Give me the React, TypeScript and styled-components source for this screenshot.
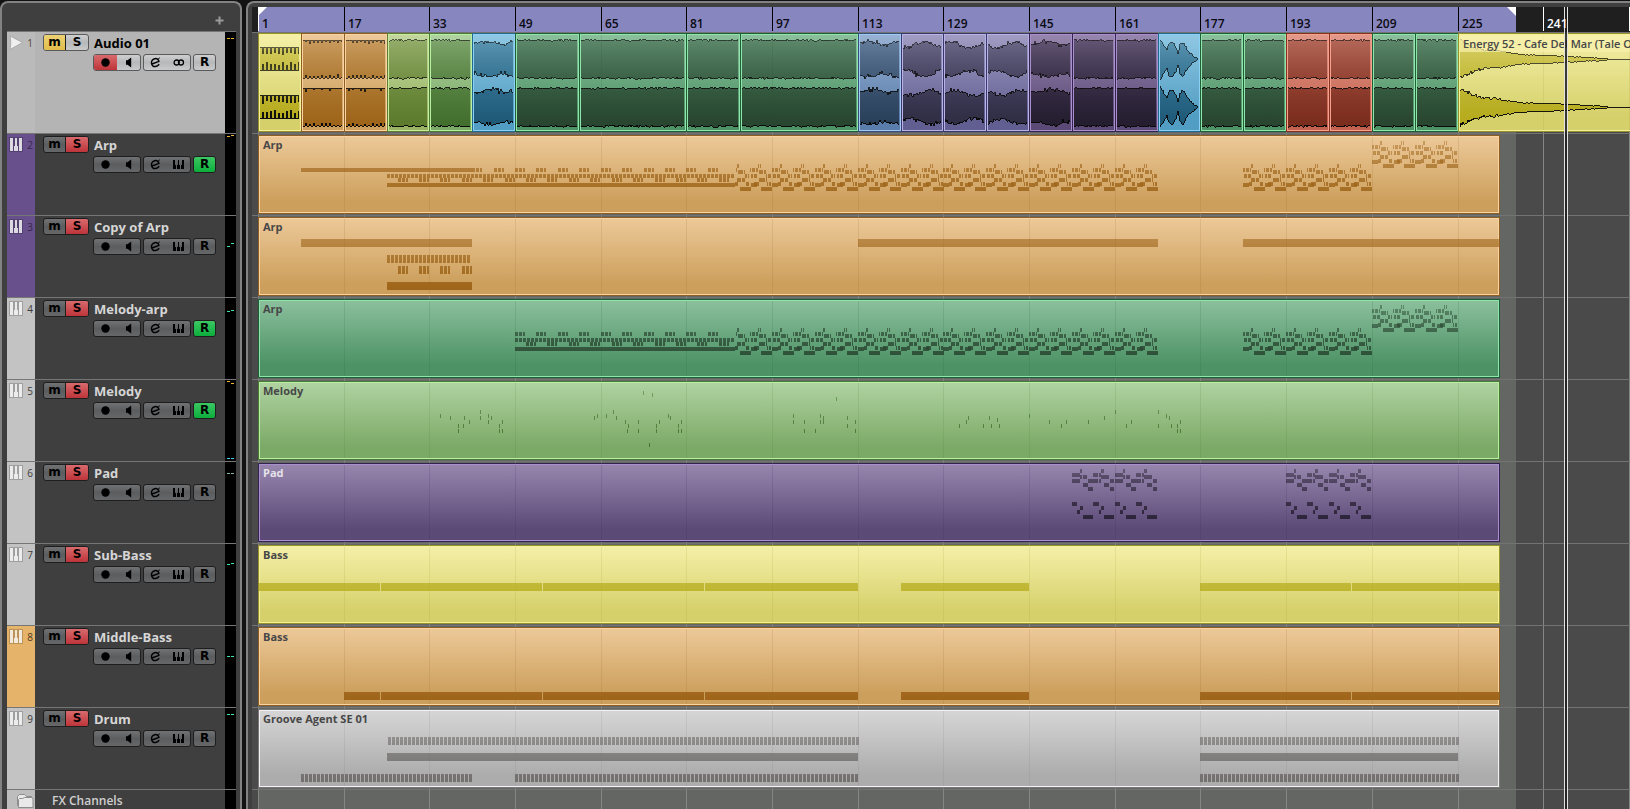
import React from "react";
import styled, { createGlobalStyle, css } from "styled-components";

const GlobalStyle = createGlobalStyle`
  * { box-sizing: border-box; }
  html, body { margin: 0; background: #121212; }
  body { font-family: "Open Sans", "Noto Sans", sans-serif; overflow: hidden; }
  button { font: inherit; padding: 0; border: 0; background: none; color: inherit; }
`;

/* ---------- time scale ---------- */

const BAR_WIDTH = 5.355;
const LAST_BAR = 233;
const PROJECT_END = 235.9;
const PLAYHEAD_BAR = 244.8;
const toX = (bar: number) => Math.round((bar - 1) * BAR_WIDTH);
const RULER_BARS = Array.from({ length: 17 }, (_, i) => 1 + i * 16);
const LAST_LABEL = 241;

/* ---------- palette ---------- */

interface Tone {
  top: string;
  bottom: string;
  light: string;
  edge: string;
  ink: string;
}

const tones: Record<string, Tone> = {
  orange: { top: "#edc999", bottom: "#cc9f5c", light: "#fbd3a3", edge: "#8e5f22", ink: "#9f661b" },
  green: { top: "#8cc09d", bottom: "#4c9265", light: "#8fe6ab", edge: "#1f5f37", ink: "#294630" },
  leaf: { top: "#b0d3a2", bottom: "#7ba966", light: "#b9f09f", edge: "#4a7a38", ink: "#44702f" },
  moss: { top: "#c3d79f", bottom: "#98b463", light: "#c9ee9b", edge: "#5e7c33", ink: "#5d7c2e" },
  violet: { top: "#9787ae", bottom: "#5b4976", light: "#a98fcd", edge: "#34244f", ink: "#251e30" },
  lavender: { top: "#a19dc3", bottom: "#615e92", light: "#b6b3e8", edge: "#3a376a", ink: "#302e44" },
  steel: { top: "#98b2d3", bottom: "#5b7dab", light: "#a4c8f4", edge: "#31507c", ink: "#2a4059" },
  blue: { top: "#90c8e3", bottom: "#519dc3", light: "#8bd0f5", edge: "#22698e", ink: "#1f5a78" },
  red: { top: "#e39a8b", bottom: "#c3614e", light: "#f7a08d", edge: "#86301f", ink: "#7b2d1e" },
  yellow: { top: "#f5f0a8", bottom: "#d5d06a", light: "#f5f09a", edge: "#98922a", ink: "#b6ab1c" },
  grey: { top: "#d6d6d6", bottom: "#acacac", light: "#f3f0f3", edge: "#787878", ink: "#747070" },
};

/* ---------- note data ---------- */

type Note = [x: number, y: number, w: number, h: number];

const bar = (from: number, to: number, y: number, h: number): Note => [
  toX(from),
  y,
  toX(to) - toX(from),
  h,
];

const dashes = (from: number, to: number, y: number, h: number): Note[] => {
  const out: Note[] = [];
  for (let x = toX(from); x < toX(to) - 1; x += 4) out.push([x, y, 3, h]);
  return out;
};

const groups = (from: number, to: number, shift: number, y: number, h: number): Note[] => {
  const out: Note[] = [];
  for (let b = from; b < to; b += 4) {
    const x = toX(b) + shift;
    out.push([x, y, 3, h], [x + 4, y, 3, h], [x + 8, y, 2, h]);
  }
  return out;
};

const ARP_FIGURE: Note[] = [
  [8, 0, 2, 4], [29, 0, 1, 4], [31, 0, 1, 4],
  [0, 4, 2, 4], [3, 4, 3, 4], [7, 4, 1, 4], [21, 4, 1, 4], [23, 4, 3, 4], [27, 4, 2, 4],
  [9, 6, 5, 4], [15, 6, 1, 4], [30, 6, 4, 4], [35, 6, 2, 4],
  [1, 10, 3, 4], [5, 10, 3, 4], [16, 10, 2, 4], [19, 10, 1, 4], [22, 10, 2, 4], [25, 10, 3, 4],
  [37, 10, 1, 8], [39, 10, 3, 4],
  [8, 14, 4, 4], [13, 14, 3, 4], [30, 14, 6, 4],
  [6, 18, 3, 4], [17, 18, 3, 4], [25, 18, 5, 4], [38, 18, 1, 4], [40, 18, 2, 4],
  [0, 19, 6, 4], [22, 19, 6, 4],
  [11, 23, 11, 4], [32, 23, 11, 4],
];

const PAD_FIGURE: Note[] = [
  [8, 0, 2, 4], [29, 0, 3, 4],
  [0, 4, 8, 4], [21, 4, 5, 4], [27, 4, 2, 4],
  [8, 6, 2, 4], [11, 6, 4, 4], [29, 6, 8, 4],
  [0, 10, 8, 4], [16, 10, 10, 4], [27, 10, 2, 4], [38, 10, 4, 4],
  [11, 14, 5, 4], [32, 14, 5, 4],
  [16, 18, 5, 4], [38, 18, 4, 4],
  [0, 33, 5, 4], [21, 33, 6, 4],
  [8, 37, 3, 4], [29, 37, 3, 4],
  [5, 41, 3, 4], [27, 41, 2, 4],
  [11, 46, 10, 4], [32, 46, 10, 4],
];

const repeat = (figure: Note[], from: number, to: number, y: number): Note[] => {
  const out: Note[] = [];
  for (let b = from; b < to; b += 8)
    figure.forEach(([nx, ny, w, h]) => out.push([toX(b) + nx, y + ny, w, h]));
  return out;
};

const arpFigures: Note[] = [
  ...repeat(ARP_FIGURE, 89, 97, 29).filter(([x]) => x >= toX(90)),
  ...repeat(ARP_FIGURE, 97, 169, 29),
  ...repeat(ARP_FIGURE, 185, 209, 29),
  ...repeat(ARP_FIGURE, 209, 225, 6),
];

const arpNotes: Note[] = [
  bar(9, 41, 33, 4),
  ...groups(41, 89, 0, 33, 4),
  ...dashes(25, 90, 39, 4),
  ...groups(25, 88, 11, 43, 4),
  bar(25, 90, 48, 4),
  ...arpFigures,
];

const copyNotes: Note[] = [
  bar(9, 41, 22, 8),
  bar(113, 169, 22, 8),
  bar(185, 233, 22, 8),
  ...dashes(25, 41, 38, 8),
  ...groups(25, 41, 11, 49, 8),
  bar(25, 41, 65, 8),
];

const melodyArpNotes: Note[] = [
  ...groups(49, 89, 0, 33, 4),
  ...dashes(49, 90, 39, 4),
  ...groups(49, 88, 11, 43, 4),
  bar(49, 90, 48, 4),
  ...arpFigures,
];

const MELODY_TICKS: [number, number][] = [
  [182, 33], [192, 35], [206, 35], [211, 39], [200, 43], [205, 43], [200, 48], [222, 29], [222, 35],
  [230, 33], [233, 35], [230, 39], [244, 39], [241, 43], [241, 48], [244, 48],
  [336, 35], [339, 33], [348, 33], [355, 29], [358, 35], [367, 39], [370, 43], [369, 48], [380, 39],
  [380, 48], [385, 10], [394, 12], [391, 62], [398, 43], [398, 48], [401, 39], [410, 33], [412, 35],
  [420, 43], [420, 48], [423, 39], [423, 48],
  [535, 33], [535, 39], [546, 39], [546, 48], [557, 48], [562, 33], [562, 39], [565, 35], [565, 39],
  [578, 16], [589, 35], [589, 43], [597, 39], [597, 48],
  [701, 43], [708, 39], [710, 35], [725, 43], [731, 35], [733, 43], [739, 37], [741, 43],
  [771, 33], [791, 39], [803, 43], [808, 39], [830, 39], [846, 35], [857, 29], [868, 43], [873, 39],
  [900, 29], [900, 43], [908, 33], [911, 35], [913, 43], [919, 43], [922, 39], [919, 48], [922, 48],
];
const melodyNotes: Note[] = MELODY_TICKS.map(([x, y]) => [x, y, 1, 4]);

const padNotes: Note[] = [...repeat(PAD_FIGURE, 153, 169, 6), ...repeat(PAD_FIGURE, 193, 209, 6)];

const bassNotes = (start: number, y: number): Note[] => {
  const seams = [23.8, 54, 84.3].map((b) => toX(b));
  const stops = [toX(start), ...seams, toX(113)];
  const lead = stops.slice(0, -1).map((x, i): Note => [x + (i ? 1 : 0), y, stops[i + 1] - x - (i ? 1 : 0), 8]);
  const tail = toX(205.2);
  return [
    ...lead,
    bar(121, 145, y, 8),
    [toX(177), y, tail - toX(177), 8],
    [tail + 1, y, toX(233) - tail - 1, 8],
  ];
};

const drumNotes: Note[] = [
  ...dashes(25.2, 113, 28, 8),
  ...dashes(177, 225, 28, 8),
  bar(25, 113, 44, 8),
  bar(177, 225, 44, 8),
  ...dashes(9, 41, 65, 8),
  ...dashes(49, 113, 65, 8),
  ...dashes(177, 225, 65, 8),
];

/* ---------- tracks ---------- */

interface MeterMark { y: [number, number]; color: string }

interface Track {
  name: string;
  stripe: string;
  numberColor: string;
  read?: boolean;
  audio?: boolean;
  meter: MeterMark[];
  clip?: { label: string; tone: Tone; notes: Note[]; labelColor?: string };
}

const AMBER = "#f0b428";
const MINT = "#3ce6a8";
const SILVER = "#c3c3c3";

const tracks: Track[] = [
  { name: "Audio 01", stripe: "#bababa", numberColor: "#5a4634", audio: true, meter: [{ y: [6, 6], color: AMBER }] },
  { name: "Arp", stripe: "#67508b", numberColor: "#35284c", read: true, meter: [{ y: [2, 1], color: AMBER }], clip: { label: "Arp", tone: tones.orange, notes: arpNotes } },
  { name: "Copy of Arp", stripe: "#67508b", numberColor: "#35284c", meter: [{ y: [30, 27], color: MINT }], clip: { label: "Arp", tone: tones.orange, notes: copyNotes } },
  { name: "Melody-arp", stripe: SILVER, numberColor: "#3c3c3c", read: true, meter: [{ y: [13, 12], color: MINT }], clip: { label: "Arp", tone: tones.green, notes: melodyArpNotes } },
  { name: "Melody", stripe: SILVER, numberColor: "#3c3c3c", read: true, meter: [{ y: [1, 3], color: AMBER }, { y: [78, 78], color: "#3cc8f0" }], clip: { label: "Melody", tone: tones.leaf, notes: melodyNotes } },
  { name: "Pad", stripe: SILVER, numberColor: "#3c3c3c", meter: [{ y: [11, 11], color: "#7fb59a" }], clip: { label: "Pad", tone: tones.violet, notes: padNotes, labelColor: "#e6e2ea" } },
  { name: "Sub-Bass", stripe: SILVER, numberColor: "#3c3c3c", meter: [{ y: [20, 19], color: MINT }], clip: { label: "Bass", tone: tones.yellow, notes: bassNotes(1, 38) } },
  { name: "Middle-Bass", stripe: "#e6b36a", numberColor: "#4d3a1e", meter: [{ y: [30, 30], color: MINT }], clip: { label: "Bass", tone: tones.orange, notes: bassNotes(17, 65) } },
  { name: "Drum", stripe: SILVER, numberColor: "#3c3c3c", meter: [{ y: [6, 6], color: MINT }], clip: { label: "Groove Agent SE 01", tone: tones.grey, notes: drumNotes } },
];

type WaveKind = "pulse" | "spiky" | "flat" | "rough" | "swell" | "break" | "decay";

const audioClips: { from: number; to: number; tone: Tone; wave: WaveKind; label?: string }[] = [
  { from: 1, to: 9, tone: tones.yellow, wave: "pulse" },
  { from: 9, to: 17, tone: tones.orange, wave: "spiky" },
  { from: 17, to: 25, tone: tones.orange, wave: "spiky" },
  { from: 25, to: 33, tone: tones.moss, wave: "flat" },
  { from: 33, to: 41, tone: tones.leaf, wave: "flat" },
  { from: 41, to: 49, tone: tones.blue, wave: "rough" },
  { from: 49, to: 61, tone: tones.green, wave: "flat" },
  { from: 61, to: 81, tone: tones.green, wave: "flat" },
  { from: 81, to: 91, tone: tones.green, wave: "flat" },
  { from: 91, to: 113, tone: tones.green, wave: "flat" },
  { from: 113, to: 121, tone: tones.steel, wave: "rough" },
  { from: 121, to: 129, tone: tones.lavender, wave: "swell" },
  { from: 129, to: 137, tone: tones.lavender, wave: "swell" },
  { from: 137, to: 145, tone: tones.lavender, wave: "swell" },
  { from: 145, to: 153, tone: tones.violet, wave: "rough" },
  { from: 153, to: 161, tone: tones.violet, wave: "flat" },
  { from: 161, to: 169, tone: tones.violet, wave: "flat" },
  { from: 169, to: 177, tone: tones.blue, wave: "break" },
  { from: 177, to: 185, tone: tones.green, wave: "flat" },
  { from: 185, to: 193, tone: tones.green, wave: "flat" },
  { from: 193, to: 201, tone: tones.red, wave: "flat" },
  { from: 201, to: 209, tone: tones.red, wave: "flat" },
  { from: 209, to: 217, tone: tones.green, wave: "flat" },
  { from: 217, to: 225, tone: tones.green, wave: "flat" },
  { from: 225, to: 321, tone: tones.yellow, wave: "decay", label: "Energy 52 - Cafe Del Mar (Tale Of Us)" },
];

/* ---------- waveform ---------- */

const random = (seed: number) => () => {
  seed = (seed + 0x6d2b79f5) | 0;
  let t = Math.imul(seed ^ (seed >>> 15), 1 | seed);
  t = (t + Math.imul(t ^ (t >>> 7), 61 | t)) ^ t;
  return ((t ^ (t >>> 14)) >>> 0) / 4294967296;
};

const curve = (points: [number, number][], x: number) => {
  for (let i = 1; i < points.length; i++) {
    const [x0, y0] = points[i - 1];
    const [x1, y1] = points[i];
    if (x <= x1) return y0 + ((x - x0) / (x1 - x0)) * (y1 - y0);
  }
  return points[points.length - 1][1];
};

const BREAK_SHAPE: [number, number][] = [
  [0, 20], [3, 16], [7, 9], [9, 16], [13, 17], [16, 12], [18, 5], [20, 14], [23, 17], [25, 14], [27, 10], [30, 6], [34, 3], [38, 0], [43, 0],
];
const DECAY_SHAPE: [number, number][] = [
  [0, 18], [8, 15], [14, 12], [24, 9], [34, 9], [46, 7], [60, 5], [75, 4], [90, 4], [106, 3], [125, 2], [145, 1], [150, 0],
];

const amplitude = (kind: WaveKind, x: number, r: () => number, phase: number) => {
  switch (kind) {
    case "pulse":
      return x % 4 < 3 ? 12 - (x % 2) : 3 + r() * 3;
    case "spiky":
      return x % 4 === 3 ? 15 + r() * 3 : 19;
    case "flat":
      return r() > 0.8 ? 17.6 : 18.6 + r() * 1.2;
    case "rough":
      return 17 + Math.sin(x / 5 + phase) * 1.5 - (r() > 0.7 ? r() * 4 : r()) + (r() > 0.9 ? 2 : 0);
    case "swell":
      return 15.5 + Math.cos(x / 6 + phase) * 3 - r() * 3 + (r() > 0.85 ? 2 : 0);
    case "break":
      return Math.max(0, curve(BREAK_SHAPE, x) + (x < 36 ? r() * 2 - 1 : 0));
    case "decay":
      return Math.max(0, curve(DECAY_SHAPE, x) + (x < 140 ? (r() - 0.5) * Math.max(1, 4 - x / 20) : 0));
  }
};

const channelPaths = (kind: WaveKind, width: number, mid: number, seed: number) => {
  const r = random(seed);
  const phase = (seed % 7) * 0.9;
  const upper: string[] = [];
  const lower: string[] = [];
  for (let x = 2; x <= width - 2; x++) {
    upper.push(`${x} ${mid - Math.round(amplitude(kind, x - 2, r, phase))}`);
    lower.push(`${x} ${mid + Math.round(amplitude(kind, x - 2, r, phase))}`);
  }
  return {
    area: `M${upper.join("L")}L${[...lower].reverse().join("L")}Z`,
    line: `M${upper.join("L")}M${lower.join("L")}`,
  };
};

/* ---------- shell ---------- */

const Workspace = styled.main`
  display: flex;
  gap: 4px;
  height: 100vh;
  padding-top: 1px;
`;

const panelFrame = css`
  display: flex;
  flex-direction: column;
  overflow: hidden;
  background: #3f3f3f;
  border: 2px solid #828282;
  border-bottom: 0;
`;

const TrackPanel = styled.section`
  ${panelFrame}
  flex: 0 0 242px;
  border-radius: 8px 8px 0 0;
  padding: 0 4px 0 5px;
`;

const ArrangePanel = styled.section`
  ${panelFrame}
  flex: 1;
  min-width: 0;
  border-right: 0;
  border-radius: 8px 0 0 0;
  padding: 4px 0 0 4px;
`;

const PanelHeader = styled.header`
  display: flex;
  flex: 0 0 28px;
  align-items: center;
  justify-content: flex-end;
  padding: 6px 12px 0 0;
`;

const AddButton = styled.button`
  display: flex;
  width: 9px;
  height: 9px;
  color: #9b9b9b;
`;

/* ---------- track list ---------- */

const TrackList = styled.ol`
  flex: 1;
  margin: 0;
  padding: 0;
  list-style: none;
  background: linear-gradient(90deg, transparent calc(100% - 11px), #000 calc(100% - 11px));
`;

const TrackRow = styled.li<{ $selected?: boolean }>`
  display: flex;
  height: ${(p) => (p.$selected ? 102 : 82)}px;
  border-top: 1px solid #767676;
  background: ${(p) => (p.$selected ? "#b4b4b4" : "#3f3f3f")};
  color: ${(p) => (p.$selected ? "#000" : "#d6d6d6")};
`;

const Stripe = styled.div<{ $color: string; $ink: string }>`
  display: flex;
  flex: 0 0 28px;
  align-items: flex-start;
  justify-content: space-between;
  padding: 3px 2px 0;
  background: ${(p) => p.$color};
  color: ${(p) => p.$ink};
  font-size: 10px;
  line-height: 16px;
`;

const TrackBody = styled.div`
  flex: 1;
  padding: 2px 0 0 8px;
`;

const TitleLine = styled.div`
  display: flex;
  gap: 5px;
  height: 17px;
`;

const TrackName = styled.h2`
  margin: 0;
  font-size: 13px;
  font-weight: 700;
  line-height: 19px;
  white-space: nowrap;
`;

const ControlLine = styled.div`
  display: flex;
  gap: 2px;
  margin: 3px 0 0 50px;
`;

const ButtonGroup = styled.div<{ $bright?: boolean }>`
  display: flex;
  height: 17px;
  border: 1px solid ${(p) => (p.$bright ? "#5a5a5a" : "#1e1e1e")};
  border-radius: 3px;
  overflow: hidden;
  background: ${(p) =>
    p.$bright ? "linear-gradient(#cfcfd0, #b7b8ba 50%, #c9cacb)" : "linear-gradient(#717274, #5c5d5f 50%, #666769)"};
`;

const lit = {
  mute: "linear-gradient(#eed273, #e0bd4a)",
  solo: "linear-gradient(#d96a6d, #bd3439)",
  record: "linear-gradient(#d96a6d, #bd3439)",
  read: "linear-gradient(#3cc763, #0cae3c)",
};

const ControlButton = styled.button<{ $lit?: keyof typeof lit; $divided?: boolean; $narrow?: boolean }>`
  display: flex;
  align-items: center;
  justify-content: center;
  width: ${(p) => (p.$narrow ? 21 : 23)}px;
  height: 15px;
  background: ${(p) => (p.$lit ? lit[p.$lit] : "transparent")};
  border-left: ${(p) => (p.$divided ? "1px solid #1e1e1e" : "0")};
  color: #000;
  font-family: "DejaVu Sans", sans-serif;
  font-size: 12px;
  font-weight: 700;
  line-height: 15px;
`;

const Meter = styled.svg`
  flex: 0 0 11px;
  height: 100%;
  background: #000;
`;

const FolderRow = styled(TrackRow)`
  height: 30px;
  background: transparent;
`;

const FolderStripe = styled(Stripe)`
  justify-content: flex-end;
  padding: 3px 1px 0;
`;

const FolderName = styled.h2`
  margin: 0;
  padding: 2px 0 0 17px;
  font-size: 12px;
  font-weight: 600;
  line-height: 17px;
  color: #cfcfcf;
`;

/* ---------- timeline ---------- */

const Timeline = styled.div`
  position: relative;
  flex: 1;
  overflow: hidden;
`;

const Ruler = styled.div`
  position: relative;
  display: flex;
  height: 25px;
  padding-left: 6px;
  background: #1f1f1f;
`;

const LocatorRange = styled.div`
  position: absolute;
  top: 0;
  left: 6px;
  height: 100%;
  background: #8886be;

  &::before,
  &::after {
    content: "";
    position: absolute;
    top: 0;
    border-top: 9px solid #fff;
  }
  &::before { left: 0; border-right: 9px solid transparent; }
  &::after { right: 0; border-left: 9px solid transparent; }
`;

const RulerCell = styled.div<{ $outside: boolean; $first: boolean }>`
  position: relative;
  z-index: 2;
  flex: none;
  height: 24px;
  padding: 9px 0 0 3px;
  border-left: 1px solid ${(p) => (p.$outside || p.$first ? "#fff" : "#000")};
  color: ${(p) => (p.$outside ? "#fff" : "#0a0a12")};
  font-size: 12px;
  font-weight: 600;
  line-height: 16px;
`;

const Lanes = styled.div`
  position: relative;
  height: 100%;
`;

const Backdrop = styled.div<{ $end: number }>`
  position: absolute;
  inset: 0;
  display: flex;
  padding-left: 6px;
  background: linear-gradient(
    90deg,
    #4a4a4a 6px,
    #646664 6px ${(p) => p.$end}px,
    #4a4a4a ${(p) => p.$end}px
  );
`;

const GridCell = styled.div`
  flex: none;
  border-left: 1px solid #858785;
`;

const Lane = styled.div<{ $audio?: boolean }>`
  position: relative;
  display: flex;
  height: ${(p) => (p.$audio ? 101 : 82)}px;
  padding: ${(p) => (p.$audio ? "0 0 1px 6px" : "1px 0 1px 6px")};
  border-top: 1px solid #727372;
`;

const ClipFrame = styled.article<{ $tone: Tone; $joined?: boolean }>`
  display: grid;
  flex: none;
  overflow: hidden;
  border: 1px solid ${(p) => p.$tone.edge};
  border-right-width: ${(p) => (p.$joined ? 0 : 1)}px;
  box-shadow: inset 0 0 0 1px ${(p) => p.$tone.light};
  background: linear-gradient(${(p) => p.$tone.top}, ${(p) => p.$tone.bottom} 85%);

  > * { grid-area: 1 / 1; }
`;

const ClipDrawing = styled.svg`
  display: block;
  margin: -1px;
`;

const ClipLabel = styled.h3<{ $color?: string; $band?: boolean }>`
  align-self: start;
  margin: ${(p) => (p.$band ? 1 : 0)}px 1px;
  padding: 0 0 0 3px;
  background: ${(p) => (p.$band ? "rgba(246, 240, 170, 0.72)" : "transparent")};
  color: ${(p) => p.$color ?? "#474747"};
  font-size: 11px;
  font-weight: ${(p) => (p.$band ? 600 : 700)};
  line-height: 17px;
  white-space: nowrap;
`;

const Playhead = styled.div`
  position: absolute;
  z-index: 1;
  top: 0;
  bottom: 0;
  width: 4px;
  background: rgba(30, 30, 30, 0.85);
  border: solid #e2e2e2;
  border-width: 0 1px;
`;

/* ---------- icons ---------- */

const PlusIcon = () => (
  <svg width="9" height="9" aria-hidden="true">
    <path d="M3.5 0.5h2v3h3v2h-3v3h-2v-3h-3v-2h3z" fill="currentColor" />
  </svg>
);

const RecordIcon = () => (
  <svg width="9" height="9" aria-hidden="true">
    <circle cx="4.5" cy="4.5" r="4.2" fill="currentColor" />
  </svg>
);

const MonitorIcon = () => (
  <svg width="9" height="11" aria-hidden="true">
    <path d="M3.5 3.2L7.2 0.5v10L3.5 7.8H2v-4.6z" fill="currentColor" />
  </svg>
);

const EditIcon = () => (
  <svg width="11" height="11" fill="none" stroke="currentColor" strokeWidth="1.4" aria-hidden="true">
    <path d="M2 7L9 4.4C8.6 2.2 6.8 1.2 4.8 1.7C2.6 2.300 1.300 4.200 1.500 6.200C1.700 8.600 3.400 9.800 5.400 9.500C7 9.300 8.200 8.500 9.200 7.200" />
    <path d="M7.6 2.6L9.8 0.8" strokeWidth="1" />
  </svg>
);

const StereoIcon = () => (
  <svg width="12" height="9" fill="none" stroke="currentColor" strokeWidth="1.3" aria-hidden="true">
    <circle cx="3.6" cy="4.5" r="2.5" />
    <circle cx="8" cy="4.5" r="2.5" />
  </svg>
);

const KeysIcon = () => (
  <svg width="11" height="9" fill="currentColor" shapeRendering="crispEdges" aria-hidden="true">
    <path d="M0 0h2v5h1v4H0zM5 0h1v5h1v4H4V5h1zM9 0h2v9H8V5h1z" />
  </svg>
);

const KeyboardBadge = () => (
  <svg width="14" height="15" shapeRendering="crispEdges" aria-hidden="true">
    <rect width="14" height="15" fill="#000" fillOpacity=".18" />
    <path d="M1 1h3v13H1zM6 1h2v8h1v5H5V9h1zM10 1h3v13h-3z" fill="#fff" fillOpacity=".8" />
  </svg>
);

const WaveBadge = () => (
  <svg width="14" height="15" aria-hidden="true">
    <path d="M1 1L13.5 7.5L1 14.5C2 10 2 5 1 1z" fill="#efefef" stroke="#a3a3a3" strokeWidth=".8" />
  </svg>
);

const FolderIcon = () => (
  <svg width="18" height="16" fill="#e9e9e9" stroke="#8d8d8d" aria-hidden="true">
    <path d="M1.5 12.5v-9l2-2h5l2 2h5v9z" />
    <path d="M2.5 14.5v-8l1-1h3l2-1h7l1.5 1v9z" />
  </svg>
);

/* ---------- parts ---------- */

function TrackHeader({ track, index }: { track: Track; index: number }) {
  const bright = track.audio;
  return (
    <TrackRow $selected={bright}>
      <Stripe $color={track.stripe} $ink={track.numberColor}>
        {track.audio ? <WaveBadge /> : <KeyboardBadge />}
        <span>{index + 1}</span>
      </Stripe>
      <TrackBody>
        <TitleLine>
          <ButtonGroup $bright={bright}>
            <ControlButton $narrow $lit={bright ? "mute" : undefined} aria-label={`Mute ${track.name}`}>m</ControlButton>
            <ControlButton $divided $lit={bright ? undefined : "solo"} aria-label={`Solo ${track.name}`}>S</ControlButton>
          </ButtonGroup>
          <TrackName>{track.name}</TrackName>
        </TitleLine>
        <ControlLine>
          <ButtonGroup $bright={bright}>
            <ControlButton $lit={bright ? "record" : undefined} aria-label={`Record enable ${track.name}`}><RecordIcon /></ControlButton>
            <ControlButton aria-label={`Monitor ${track.name}`}><MonitorIcon /></ControlButton>
          </ButtonGroup>
          <ButtonGroup $bright={bright}>
            <ControlButton aria-label={`Edit channel ${track.name}`}><EditIcon /></ControlButton>
            <ControlButton aria-label={track.audio ? "Stereo" : `Open instrument ${track.name}`}>
              {track.audio ? <StereoIcon /> : <KeysIcon />}
            </ControlButton>
          </ButtonGroup>
          <ButtonGroup $bright={bright}>
            <ControlButton $narrow $lit={track.read ? "read" : undefined} aria-label={`Read automation ${track.name}`}>R</ControlButton>
          </ButtonGroup>
        </ControlLine>
      </TrackBody>
      <Meter aria-hidden="true">
        {track.meter.map((m, i) => (
          <g key={i} fill={m.color}>
            <rect x="2" y={m.y[0]} width="3" height="1" />
            <rect x="6" y={m.y[1]} width="3" height="1" />
          </g>
        ))}
      </Meter>
    </TrackRow>
  );
}

function InkGradient({ id, color, height, from }: { id: string; color: string; height: number; from: number }) {
  return (
    <linearGradient id={id} gradientUnits="userSpaceOnUse" x1="0" y1="0" x2="0" y2={height}>
      <stop offset="0" stopColor={color} stopOpacity={from} />
      <stop offset=".9" stopColor={color} />
    </linearGradient>
  );
}

function ClipGridLines({ from, to, height, tone }: { from: number; to: number; height: number; tone: Tone }) {
  return (
    <g fill={tone.edge} fillOpacity=".15">
      {RULER_BARS.filter((b) => b > from && b < to).map((b) => (
        <rect key={b} x={toX(b) - toX(from)} y="2" width="1" height={height - 4} />
      ))}
    </g>
  );
}

function MidiClip({ id, clip }: { id: number; clip: NonNullable<Track["clip"]> }) {
  const width = toX(LAST_BAR);
  return (
    <ClipFrame $tone={clip.tone} style={{ width }}>
      <ClipDrawing width={width} height="79" shapeRendering="crispEdges" aria-hidden="true">
        <defs><InkGradient id={`ink-${id}`} color={clip.tone.ink} height={79} from={0.4} /></defs>
        <ClipGridLines from={1} to={LAST_BAR} height={79} tone={clip.tone} />
        <g fill={`url(#ink-${id})`}>
          {clip.notes.map(([x, y, w, h], i) => <rect key={i} x={x} y={y} width={w} height={h} />)}
        </g>
      </ClipDrawing>
      <ClipLabel $color={clip.labelColor}>{clip.label}</ClipLabel>
    </ClipFrame>
  );
}

function AudioClip({ clip, index }: { clip: (typeof audioClips)[number]; index: number }) {
  const width = toX(clip.to) - toX(clip.from);
  return (
    <ClipFrame $tone={clip.tone} $joined style={{ width }}>
      <ClipDrawing width={width} height="99" shapeRendering="crispEdges" aria-hidden="true">
        <defs>
          <InkGradient id={`wave-${index}`} color={clip.tone.ink} height={99} from={0.4} />
          <InkGradient id={`edge-${index}`} color="#0a0a0a" height={99} from={0.55} />
        </defs>
        <ClipGridLines from={clip.from} to={clip.to} height={99} tone={clip.tone} />
        {[26, 74].map((mid) => {
          const { area, line } = channelPaths(clip.wave, width, mid, index * 31 + mid);
          return (
            <g key={mid}>
              <path d={area} fill={`url(#wave-${index})`} />
              <path d={line} fill="none" stroke={`url(#edge-${index})`} />
            </g>
          );
        })}
      </ClipDrawing>
      {clip.label && <ClipLabel $band>{clip.label}</ClipLabel>}
    </ClipFrame>
  );
}

export default function App() {
  return (
    <>
      <GlobalStyle />
      <Workspace>
        <TrackPanel aria-label="Tracks">
          <PanelHeader>
            <AddButton aria-label="Add track"><PlusIcon /></AddButton>
          </PanelHeader>
          <TrackList>
            {tracks.map((track, i) => <TrackHeader key={track.name} track={track} index={i} />)}
            <FolderRow>
              <FolderStripe $color="#bdbdbd" $ink="#555"><FolderIcon /></FolderStripe>
              <FolderName>FX Channels</FolderName>
            </FolderRow>
          </TrackList>
        </TrackPanel>

        <ArrangePanel aria-label="Arrangement">
          <Timeline>
            <Ruler>
              <LocatorRange style={{ width: toX(PROJECT_END) }} />
              {RULER_BARS.map((b) => (
                <RulerCell key={b} $first={b === 1} $outside={b > PROJECT_END} style={{ width: toX(b + 16) - toX(b) }}>
                  {b <= LAST_LABEL && b}
                </RulerCell>
              ))}
            </Ruler>
            <Lanes>
              <Backdrop $end={6 + toX(PROJECT_END)}>
                {RULER_BARS.map((b) => <GridCell key={b} style={{ width: toX(b + 16) - toX(b) }} />)}
              </Backdrop>
              {tracks.map((track, i) => (
                <Lane key={track.name} $audio={track.audio}>
                  {track.audio
                    ? audioClips.map((clip, n) => <AudioClip key={clip.from} clip={clip} index={n} />)
                    : track.clip && <MidiClip id={i} clip={track.clip} />}
                </Lane>
              ))}
              <Lane />
            </Lanes>
            <Playhead style={{ left: 6 + toX(PLAYHEAD_BAR) }} />
          </Timeline>
        </ArrangePanel>
      </Workspace>
    </>
  );
}
